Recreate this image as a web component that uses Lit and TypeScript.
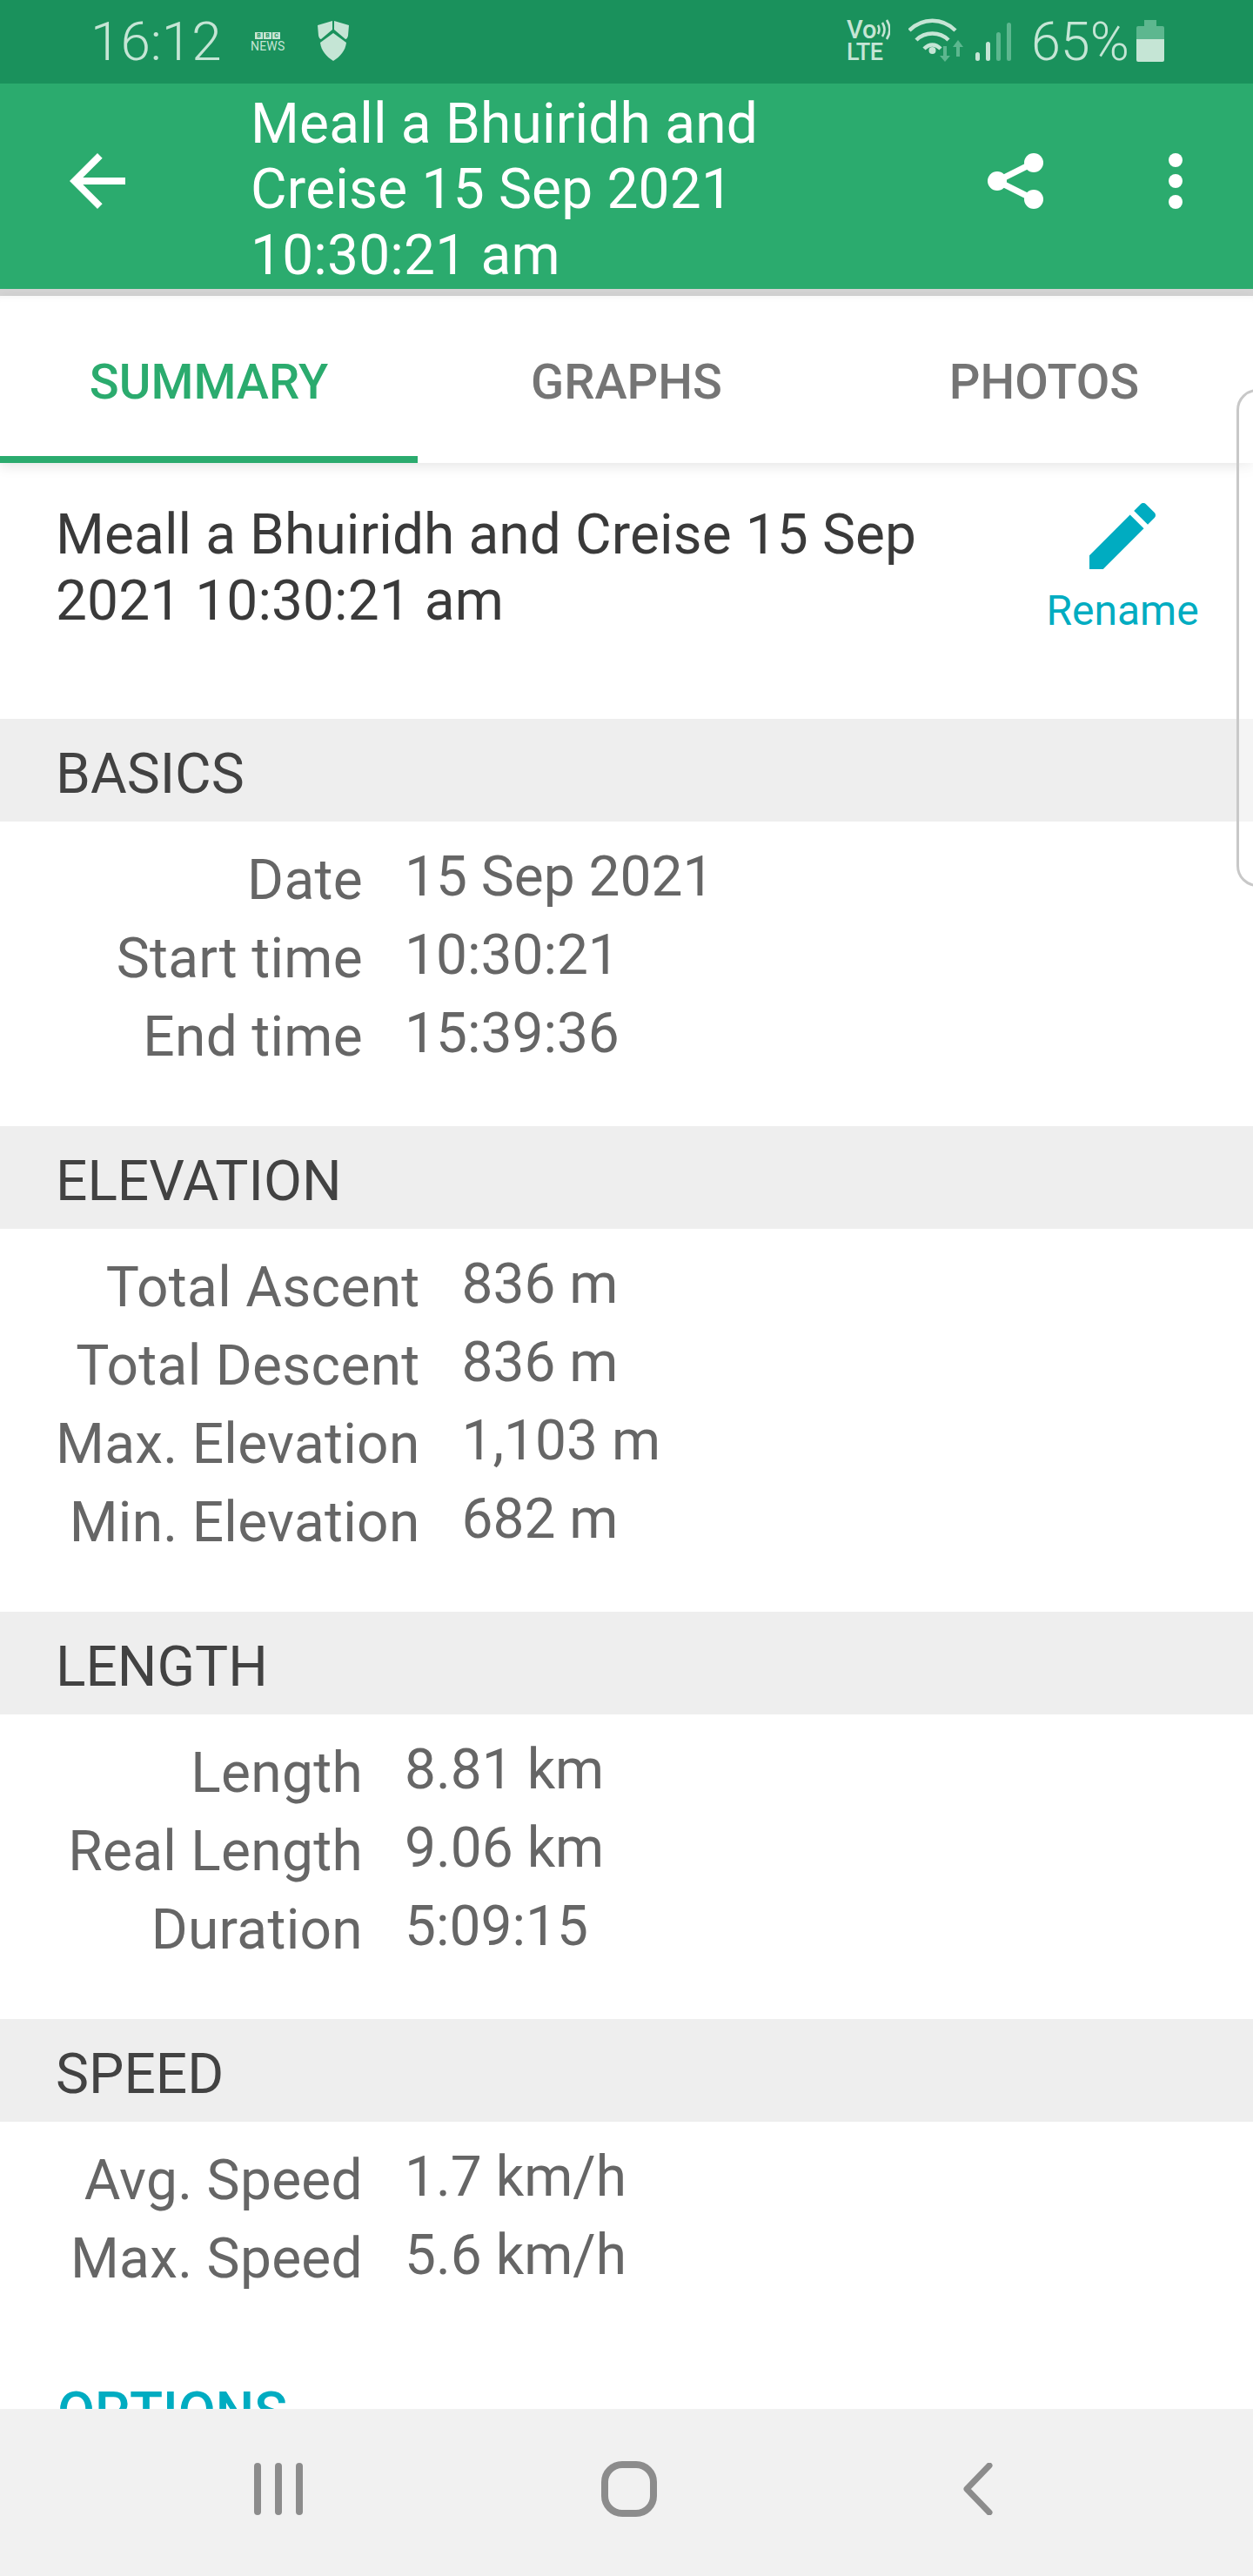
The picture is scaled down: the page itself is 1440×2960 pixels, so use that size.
import { LitElement, html, css } from "lit";
import { customElement } from "lit/decorators.js";

type Row = [string, string];
const sections: { title: string; rows: Row[] }[] = [
  { title: "BASICS", rows: [["Date", "15 Sep 2021"], ["Start time", "10:30:21"], ["End time", "15:39:36"]] },
  { title: "ELEVATION", rows: [["Total Ascent", "836 m"], ["Total Descent", "836 m"], ["Max. Elevation", "1,103 m"], ["Min. Elevation", "682 m"]] },
  { title: "LENGTH", rows: [["Length", "8.81 km"], ["Real Length", "9.06 km"], ["Duration", "5:09:15"]] },
  { title: "SPEED", rows: [["Avg. Speed", "1.7 km/h"], ["Max. Speed", "5.6 km/h"]] },
];

@customElement("app-root")
export class AppRoot extends LitElement {
  static styles = css`
    :host { display: block; width: 1440px; height: 2960px; overflow: hidden; position: relative; background: #fff; font-family: Roboto, "Liberation Sans", sans-serif; }
    .page { display: flex; flex-direction: column; height: 2960px; }
    .status { flex: none; height: 96px; background: #1a915c; color: #c5e5d5; display: flex; align-items: flex-start; box-sizing: border-box; padding-left: 104px; }
    .time { font-size: 62px; font-weight: 300; line-height: 96px; width: 184px; }
    .bbc { width: 77px; padding-top: 37px; display: flex; flex-direction: column; }
    .boxes { display: flex; gap: 1px; padding-left: 5px; }
    .boxes span { width: 9px; height: 8px; border: 0; background: #c5e5d5; color: #1a915c; font-size: 7px; font-weight: 700; line-height: 8px; text-align: center; }
    .news { font-size: 14px; line-height: 13px; margin-top: 2px; letter-spacing: 0.2px; }
    .shield { margin-top: 24px; display: block; }
    .spacer { flex: 1; }
    .volte { width: 71px; display: flex; flex-direction: column; font-weight: 500; padding-top: 20px; }
    .vo { display: flex; align-items: center; font-size: 29px; line-height: 28px; height: 28px; }
    .lte { font-size: 27px; line-height: 24px; letter-spacing: -0.5px; }
    .wifi { margin-top: 20px; display: block; }
    .pct { font-size: 61px; font-weight: 300; line-height: 96px; margin-left: 22px; width: 121px; }
    .battery { margin: 23px 102px 0 0; display: block; }

    .appbar { flex: none; height: 236px; background: #2bab6e; color: #fff; display: flex; align-items: center; }
    .back { margin: 0 0 12px 80px; width: 64px; height: 64px; flex: none; display: block; }
    .title { width: 640px; margin-left: 144px; padding-top: 8px; font-size: 64px; line-height: 75.5px; letter-spacing: 0.2px; flex: none; }
    .share { margin: 0 0 12px 207px; display: block; flex: none; }
    .more { margin: 0 0 12px 144px; display: block; flex: none; }
    .appshadow { flex: none; height: 8px; background: #d4d4d4; }

    .tabs { flex: none; height: 192px; display: flex; position: relative; box-shadow: 0 4px 14px rgba(0,0,0,.1), inset 0 8px 10px -8px rgba(0,0,0,.06); background: #fff; z-index: 1; }
    .tab { flex: 1; text-align: center; font-size: 56px; font-weight: 500; line-height: 198px; color: #757575; box-sizing: border-box; }
    .tab.on { color: #2bab6e; border-bottom: 8px solid #2bab6e; height: 192px; }

    .content { flex: 1; min-height: 0; overflow: hidden; display: flex; flex-direction: column; }
    .head { display: flex; justify-content: space-between; height: 294px; flex: none; box-sizing: border-box; padding: 0 64px 0 64px; }
    .name { width: 1010px; padding-top: 45px; font-size: 64px; line-height: 75.5px; letter-spacing: 0.1px; color: #3a3a3a; }
    .rename { display: flex; flex-direction: column; align-items: center; width: 172px; padding-top: 46px; color: #00acc1; font-size: 48px; line-height: 54px; }
    .rename svg { display: block; margin-bottom: 21px; }
    .sec-h { flex: none; height: 118px; background: #eee; color: #424242; font-size: 64px; line-height: 128px; padding-left: 64px; overflow: hidden; }
    .sec-b { flex: none; height: 350px; box-sizing: border-box; padding: 19px 0 0 64px; }
    .sec-b.tall { height: 440px; }
    .grid { display: inline-grid; grid-template-columns: minmax(353px, max-content) auto; column-gap: 48px; color: #666; font-size: 64px; }
    .lab { text-align: right; line-height: 90px; height: 90px; padding-top: 4px; box-sizing: border-box; letter-spacing: 0.3px; }
    .val { line-height: 90px; height: 90px; }
    .options { flex: none; color: #00acc1; font-size: 62.5px; font-weight: 500; line-height: 70px; padding-left: 66px; margin-top: -51px; }

    .nav { flex: none; height: 192px; background: #f1f1f1; position: relative; z-index: 2; display: flex; align-items: center; padding: 0 0 8px 292px; box-sizing: border-box; }
    .home { margin-left: 343px; }
    .navback { margin-left: 352px; }
    .handle { position: absolute; left: 1421px; top: 447px; width: 24px; height: 566px; border: 3px solid #c8c8c8; border-radius: 24px 0 0 24px; background: rgba(255,255,255,.35); z-index: 3; }
  `;

  private section(s: { title: string; rows: Row[] }) {
    return html`
      <div class="sec-h">${s.title}</div>
      <div class="sec-b ${s.rows.length === 4 ? "tall" : ""}">
        <div class="grid">
          ${s.rows.map(([l, v]) => html`<div class="lab">${l}</div><div class="val">${v}</div>`)}
        </div>
      </div>`;
  }

  render() {
    const ic = "#c5e5d5";
    return html`
      <div class="page">
        <div class="status">
          <div class="time">16:12</div>
          <div class="bbc">
            <div class="boxes"><span>B</span><span>B</span><span>C</span></div>
            <div class="news">NEWS</div>
          </div>
          <svg class="shield" width="36" height="46" viewBox="0 0 36 46" fill=${ic}>
            <path d="M17 0L0 5l1 12q1 4 3 4l13-11zM19 0l17 5-1 12q-1 4-3 4L19 10z"/>
            <path d="M18 14l15 11c-1 9-7 16-15 21C10 41 4 34 3 25z"/>
          </svg>
          <div class="spacer"></div>
          <div class="volte">
            <div class="vo">Vo<svg width="15" height="24" viewBox="0 0 15 24" fill="none" stroke=${ic} stroke-width="2.6"><path d="M1 7q3 5 0 10M6 4q5 8 0 16M11 1q7 11 0 22"/></svg></div>
            <div class="lte">LTE</div>
          </div>
          <svg class="wifi" width="119" height="52" viewBox="0 0 119 52">
            <g fill="none" stroke=${ic} stroke-width="4.5">
              <path d="M1 15C16 0 39 0 54 15M9 26c10-10 27-10 37 0M18 36c6-6 13-6 19 0"/>
            </g>
            <circle cx="27.5" cy="38" r="4" fill=${ic}/>
            <path fill="#5db78f" d="M40 33h4v11h4l-6 7-6-7h4zM55 45h4V34h4l-6-8-6 8h4z"/>
            <rect x="77" y="40" width="5" height="10" rx="2.5" fill=${ic}/>
            <rect x="89" y="28" width="5" height="22" rx="2.5" fill=${ic}/>
            <rect x="101" y="17" width="5" height="33" rx="2.5" fill="#5db78f"/>
            <rect x="113" y="6" width="5" height="44" rx="2.5" fill="#5db78f"/>
          </svg>
          <div class="pct">65%</div>
          <svg class="battery" width="32" height="48" viewBox="0 0 32 48">
            <path fill="#5db78f" d="M9 0h14v7h7a2 2 0 012 2v13H0V9a2 2 0 012-2h7z"/>
            <path fill=${ic} d="M0 22h32v24a2 2 0 01-2 2H2a2 2 0 01-2-2z"/>
          </svg>
        </div>

        <div class="appbar">
          <svg class="back" viewBox="4 4 16 16" fill="#fff"><path d="M20 11H7.83l5.59-5.59L12 4l-8 8 8 8 1.41-1.41L7.83 13H20v-2z"/></svg>
          <div class="title">Meall a Bhuiridh and Creise 15 Sep 2021 10:30:21 am</div>
          <svg class="share" width="64" height="64" viewBox="0 0 64 64" fill="#fff" stroke="#fff">
            <circle cx="53" cy="11" r="11" stroke="none"/><circle cx="11" cy="32" r="11" stroke="none"/><circle cx="53" cy="53" r="11" stroke="none"/>
            <path d="M53 11L11 32l42 21" fill="none" stroke-width="7"/>
          </svg>
          <svg class="more" width="16" height="64" viewBox="0 0 16 64" fill="#fff">
            <circle cx="8" cy="8" r="8"/><circle cx="8" cy="32" r="8"/><circle cx="8" cy="56" r="8"/>
          </svg>
        </div>
        <div class="appshadow"></div>

        <div class="tabs">
          <div class="tab on">SUMMARY</div><div class="tab">GRAPHS</div><div class="tab">PHOTOS</div>
        </div>

        <div class="content">
          <div class="head">
            <div class="name">Meall a Bhuiridh and Creise 15 Sep 2021 10:30:21 am</div>
            <div class="rename">
              <svg width="76" height="76" viewBox="3 3 18 18" fill="#00acc1"><path d="M3 17.25V21h3.75L17.81 9.94l-3.75-3.75L3 17.25zM20.71 7.04a1 1 0 000-1.41l-2.34-2.34a1 1 0 00-1.41 0l-1.83 1.83 3.75 3.75 1.83-1.83z"/></svg>
              <span>Rename</span>
            </div>
          </div>
          ${sections.map((s) => this.section(s))}
          <div class="options">OPTIONS</div>
        </div>

        <div class="nav">
          <svg width="56" height="60" viewBox="0 0 56 60" fill="#8c8c8c"><rect x="0" width="8" height="60" rx="4"/><rect x="24" width="8" height="60" rx="4"/><rect x="48" width="8" height="60" rx="4"/></svg>
          <svg class="home" width="64" height="64" viewBox="0 0 64 64" fill="none" stroke="#8c8c8c" stroke-width="8"><rect x="4" y="4" width="56" height="56" rx="20"/></svg>
          <svg class="navback" width="34" height="60" viewBox="0 0 34 60" fill="none" stroke="#8c8c8c" stroke-width="7" stroke-linecap="round" stroke-linejoin="round"><path d="M30 3L4 30l26 27"/></svg>
        </div>
      </div>
      <div class="handle"></div>
    `;
  }
}
